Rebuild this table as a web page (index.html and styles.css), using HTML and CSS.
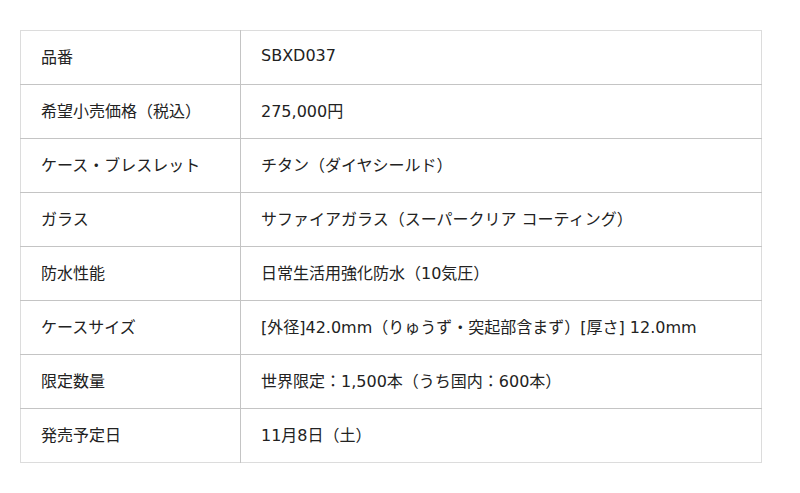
FILE: index.html
```html
<!DOCTYPE html>
<html lang="ja">
<head>
<meta charset="utf-8">
<link rel="stylesheet" href="styles.css">
</head>
<body>
<div class="wrap">
<table class="spec">
<tbody>
<tr><th>品番</th><td>SBXD037</td></tr>
<tr><th>希望小売価格（税込）</th><td>275,000円</td></tr>
<tr><th>ケース・ブレスレット</th><td>チタン（ダイヤシールド）</td></tr>
<tr><th>ガラス</th><td>サファイアガラス（スーパークリア コーティング）</td></tr>
<tr><th>防水性能</th><td>日常生活用強化防水（10気圧）</td></tr>
<tr><th>ケースサイズ</th><td>[外径]42.0mm（りゅうず・突起部含まず）[厚さ] 12.0mm</td></tr>
<tr><th>限定数量</th><td>世界限定：1,500本（うち国内：600本）</td></tr>
<tr><th>発売予定日</th><td>11月8日（土）</td></tr>
</tbody>
</table>
</div>
</body>
</html>
```
FILE: styles.css
```css
html, body {
  margin: 0;
  padding: 0;
  background: #fff;
}
.wrap {
  padding: 30px 38px 0 20px;
}
.spec {
  width: 742px;
  border-collapse: collapse;
  border: 1px solid #dcdcdc;
  font-family: "DejaVu Sans", "Noto Sans CJK JP", sans-serif;
  font-size: 16px;
  color: #222;
}
.spec th,
.spec td {
  box-sizing: border-box;
  height: 54px;
  padding: 0 20px 4px;
  text-align: left;
  font-weight: normal;
  vertical-align: middle;
  border-top: 1px solid #c4c4c4;
}
.spec tr:first-child th,
.spec tr:first-child td {
  border-top: 1px solid #dcdcdc;
}
.spec th {
  width: 220px;
  border-right: 1px solid #c4c4c4;
}
```
